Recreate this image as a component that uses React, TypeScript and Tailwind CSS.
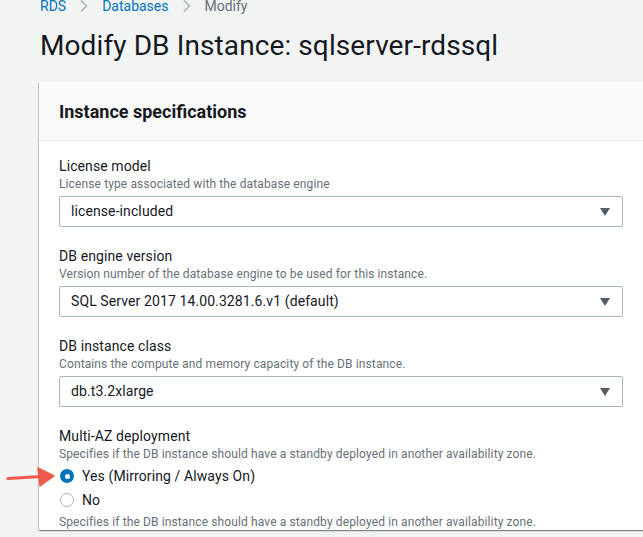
import React from "react";

const font = { fontFamily: 'Roboto, "Noto Sans", Arial, sans-serif' };

function Chevron() {
  return (
    <svg width="10" height="14" viewBox="0 0 10 14" className="mx-[13px]">
      <path d="M2 1.5 L7.5 7 L2 12.5" fill="none" stroke="#aab7b8" strokeWidth="1.6" />
    </svg>
  );
}

function Select({ value }: { value: string }) {
  return (
    <div className="mt-1 h-[31px] flex items-center justify-between border border-[#aab7b8] rounded-[2px] bg-white pl-[11px] pr-[12px]">
      <span className="text-[14px] tracking-[0.1px] text-[#16191f]">{value}</span>
      <svg width="10" height="8" viewBox="0 0 10 8">
        <path d="M0 0 H10 L5 8 Z" fill="#545b64" />
      </svg>
    </div>
  );
}

function Field({ label, desc, value }: { label: string; desc: string; value: string }) {
  return (
    <div>
      <div className="text-[14px] leading-[20px] tracking-[0.1px] text-[#16191f]">{label}</div>
      <div className="text-[12px] leading-[16px] tracking-[0.12px] text-[#687078]">{desc}</div>
      <Select value={value} />
    </div>
  );
}

export default function App() {
  return (
    <div style={font} className="w-[643px] h-[537px] overflow-hidden bg-[#f2f3f3] relative">
      <div className="pl-[40px]">
        <div className="-mt-[4px] h-[20px] flex items-center text-[14px] leading-[20px]">
          <span className="text-[#0073bb]">RDS</span>
          <Chevron />
          <span className="text-[#0073bb]">Databases</span>
          <Chevron />
          <span className="text-[#687078]">Modify</span>
        </div>
        <h1 className="mt-[12px] text-[28px] leading-[36px] tracking-[0.1px] text-[#16191f] whitespace-nowrap">
          Modify DB Instance: sqlserver-rdssql
        </h1>
        <div className="mt-[18px] -ml-px w-[640px] bg-white shadow-[0_1px_1px_0_rgba(0,28,36,0.3),1px_1px_1px_0_rgba(0,28,36,0.15),-1px_1px_1px_0_rgba(0,28,36,0.15)]">
          <div className="h-[59px] bg-[#fafafa] border-b border-[#eaeded] flex items-center pl-[20px]">
            <h2 className="text-[18px] font-bold text-[#16191f]">Instance specifications</h2>
          </div>
          <div className="pl-[20px] pr-[20px] pt-[15px] flex flex-col gap-[19px] w-[604px]">
            <Field label="License model" desc="License type associated with the database engine" value="license-included" />
            <Field
              label="DB engine version"
              desc="Version number of the database engine to be used for this instance."
              value="SQL Server 2017 14.00.3281.6.v1 (default)"
            />
            <Field
              label="DB instance class"
              desc="Contains the compute and memory capacity of the DB instance."
              value="db.t3.2xlarge"
            />
            <div>
              <div className="text-[14px] leading-[20px] tracking-[0.1px] text-[#16191f]">Multi-AZ deployment</div>
              <div className="text-[12px] leading-[16px] tracking-[0.12px] text-[#687078] whitespace-nowrap">
                Specifies if the DB instance should have a standby deployed in another availability zone.
              </div>
              <div className="mt-[2px] h-[24px] flex items-center">
                <span className="w-[14px] h-[14px] rounded-full bg-[#0073bb] flex items-center justify-center ml-[1px]">
                  <span className="w-[5px] h-[5px] rounded-full bg-white" />
                </span>
                <span className="ml-[8px] text-[14px] tracking-[0.1px] text-[#16191f]">Yes (Mirroring / Always On)</span>
              </div>
              <div className="h-[24px] flex items-center">
                <span className="w-[14px] h-[14px] rounded-full border border-[#aab7b8] bg-white ml-[1px]" />
                <span className="ml-[8px] text-[14px] text-[#16191f]">No</span>
              </div>
              <div className="mt-[2px] text-[12px] leading-[16px] tracking-[0.12px] text-[#687078] whitespace-nowrap">
                Specifies if the DB instance should have a standby deployed in another availability zone.
              </div>
            </div>
          </div>
        </div>
      </div>
      <svg className="absolute left-[6px] top-[466px]" width="50" height="22" viewBox="0 0 50 22">
        <path d="M2 12.5 L36 10.5" stroke="#ee5a4b" strokeWidth="3.2" strokeLinecap="round" />
        <path d="M32 2 L48 10 L34 20 Z" fill="#ee5a4b" strokeLinejoin="round" stroke="#ee5a4b" strokeWidth="1.5" />
      </svg>
    </div>
  );
}
